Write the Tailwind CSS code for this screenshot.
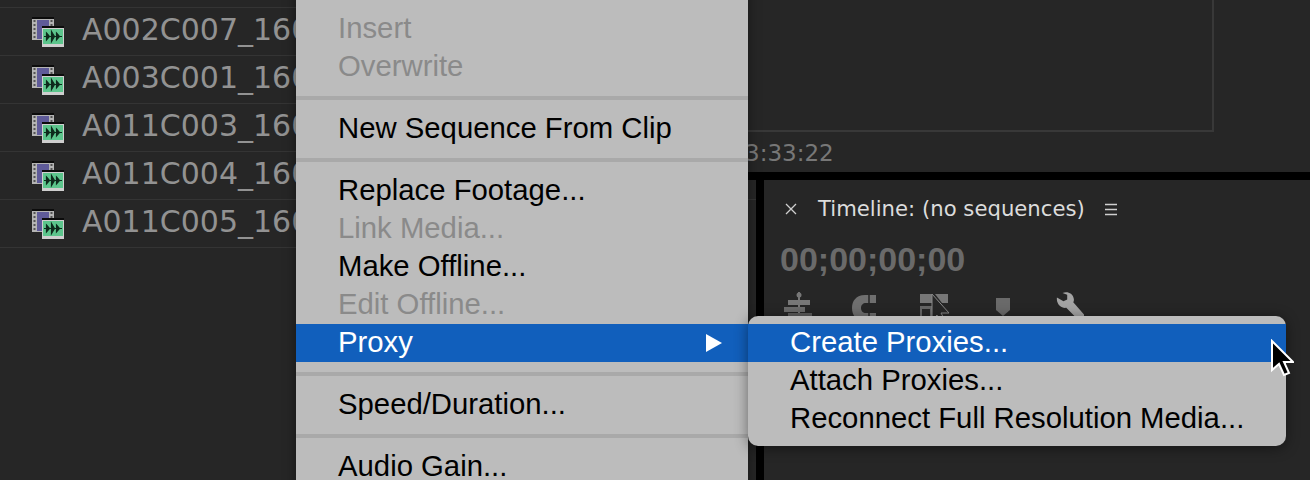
<!DOCTYPE html>
<html lang="en">
<head>
<meta charset="UTF-8">
<title>Proxy menu</title>
<script src="https://cdn.jsdelivr.net/npm/@tailwindcss/browser@4"></script>
</head>
<body class="bg-[#262626]">
<svg width="0" height="0" class="absolute">
  <symbol id="clip" viewBox="0 0 32 30">
    <rect x="0" y="0" width="22" height="2" fill="#0c0c0c"/>
    <rect x="0" y="2" width="22" height="21" fill="#b4b4b4"/>
    <rect x="5" y="3" width="12" height="19" fill="#5f5b99"/>
    <path d="M1.5 4h2M1.5 8h2M1.5 12h2M1.5 16h2M1.5 20h2M18.500 4h2M18.500 8h2M18.500 12h2" stroke="#333" stroke-width="1.500"/>
    <rect x="10" y="9" width="22" height="2" fill="#0c0c0c"/>
    <rect x="10" y="11" width="22" height="19" fill="#cfcfcf"/>
    <rect x="11" y="12" width="20" height="15" fill="#5cc58c"/>
    <path d="M12 19.500h18M14.500 16l3 3.500-3 3.500zM19.500 14.500l3 5-3 5zM24.500 16l3 3.500-3 3.500z" stroke="#0e2a1c" stroke-width="1.200" fill="#0e2a1c"/>
  </symbol>
</svg>

<div class="relative w-[1310px] h-[480px] overflow-hidden flex bg-[#262626] font-['Liberation_Sans',sans-serif]">

  <!-- project panel -->
  <div class="w-[700px] shrink-0 pt-[7px] text-[#929292] font-['DejaVu_Sans',sans-serif] text-[30px] leading-[44px]">
    <div class="h-[48px] border-t border-[#343434] flex items-start pl-[32px] gap-[18px]"><svg class="w-[32px] h-[30px] mt-[9px]"><use href="#clip"/></svg><span>A002C007_160</span></div>
    <div class="h-[48px] border-t border-[#343434] flex items-start pl-[32px] gap-[18px]"><svg class="w-[32px] h-[30px] mt-[9px]"><use href="#clip"/></svg><span>A003C001_160</span></div>
    <div class="h-[48px] border-t border-[#343434] flex items-start pl-[32px] gap-[18px]"><svg class="w-[32px] h-[30px] mt-[9px]"><use href="#clip"/></svg><span>A011C003_160</span></div>
    <div class="h-[48px] border-t border-[#343434] flex items-start pl-[32px] gap-[18px]"><svg class="w-[32px] h-[30px] mt-[9px]"><use href="#clip"/></svg><span>A011C004_160</span></div>
    <div class="h-[48px] border-t border-[#343434] flex items-start pl-[32px] gap-[18px]"><svg class="w-[32px] h-[30px] mt-[9px]"><use href="#clip"/></svg><span>A011C005_160</span></div>
    <div class="border-t border-[#343434]"></div>
  </div>

  <div class="flex-1 flex flex-col">
    <!-- monitor panel -->
    <div class="h-[172px] shrink-0 flex flex-col">
      <div class="h-[132px] w-[514px] border-r-2 border-b-2 border-[#383838]"></div>
      <div class="h-[40px] pl-[45px] pt-[4px] text-[#777] text-[23px] font-['DejaVu_Sans',sans-serif]">3:33:22</div>
    </div>
    <div class="h-[8px] shrink-0 bg-black"></div>
    <div class="flex-1 flex">
      <div class="w-[56px]"><div class="mt-[19px] border-t border-[#343434]"></div></div>
      <div class="w-[8px] bg-black"></div>
      <!-- timeline panel -->
      <div class="flex-1 pl-[16px] pt-[13px]">
        <div class="flex items-center h-[32px] text-[#dcdcdc] font-['DejaVu_Sans',sans-serif] text-[21.200px]">
          <svg class="w-[12px] h-[12px] mr-[21px] ml-[5px]" viewBox="0 0 12 12"><path d="M1 1l10 10M11 1L1 11" stroke="#cfcfcf" stroke-width="1.300"/></svg>
          <span>Timeline: (no sequences)</span>
          <svg class="w-[12px] h-[13px] ml-[20px]" viewBox="0 0 12 13"><path d="M0 1.500h12M0 6.500h12M0 11.500h12" stroke="#cfcfcf" stroke-width="1.500"/></svg>
        </div>
        <div class="mt-[14px] text-[34px] leading-[40px] font-bold text-[#6a6a6a]">00;00;00;00</div>
        <!-- toolbar -->
        <div class="flex mt-[13px] h-[30px] items-start">
          <svg class="w-[28px] h-[28px] ml-[4px]" viewBox="0 0 28 28"><path d="M15 0v28" stroke="#777" stroke-width="2"/><circle cx="15" cy="3" r="2.500" fill="#777"/><rect x="4" y="8" width="22" height="5" fill="#777"/><rect x="0" y="15" width="21" height="5" fill="#6c6c6c"/><rect x="4" y="21" width="24" height="7" fill="#5c5c5c"/></svg>
          <svg class="w-[24px] h-[26px] ml-[40px] mt-[3px]" viewBox="0 0 24 26"><path d="M24 0H13C4 0 0 6 0 13s4 13 13 13h11v-8H14c-3 0-5-2-5-5s2-5 5-5h10z" fill="#6f6f6f"/><path d="M17 0v8M17 18v8" stroke="#262626" stroke-width="1.500"/></svg>
          <svg class="w-[30px] h-[28px] ml-[44px] mt-[2px]" viewBox="0 0 30 28"><rect x="0" y="0" width="12" height="9" fill="#777"/><rect x="0" y="12" width="12" height="16" fill="#666"/><rect x="2" y="15" width="8" height="7" fill="#262626"/><path d="M15 0h13v9h-6z" fill="#777"/><path d="M12 0v26l5-5 5 9 4-2-5-9h8z" fill="#262626" stroke="#8a8a8a" stroke-width="1"/></svg>
          <svg class="w-[14px] h-[18px] ml-[46px] mt-[6px]" viewBox="0 0 14 18"><path d="M0 0h14v12l-7 6-7-6z" fill="#6a6a6a"/></svg>
          <svg class="w-[28px] h-[28px] ml-[46px]" viewBox="0 0 30 30"><path d="M1 6l7 4 4-2V3L7 1c5-2 11 0 12 6 .5 2 0 3-.5 4L30 24v6h-6L11 17C6 18 0 13 1 6z" fill="#a4a4a4"/></svg>
        </div>
      </div>
    </div>
  </div>

  <!-- context menu -->
  <div class="absolute left-[296px] top-[-10px] w-[452px] h-[500px] bg-[#bcbcbc] text-[29.300px] text-black shadow-[0_0_12px_rgba(0,0,0,0.4)]">
    <div class="pt-[20px]">
      <div class="h-[38px] pl-[42px] leading-[36px] text-[#8a8a8a]">Insert</div>
      <div class="h-[38px] pl-[42px] leading-[36px] text-[#8a8a8a]">Overwrite</div>
      <div class="h-[4px] my-[10px] bg-[#a9a9a9]"></div>
      <div class="h-[38px] pl-[42px] leading-[36px]">New Sequence From Clip</div>
      <div class="h-[4px] my-[10px] bg-[#a9a9a9]"></div>
      <div class="h-[38px] pl-[42px] leading-[36px]">Replace Footage...</div>
      <div class="h-[38px] pl-[42px] leading-[36px] text-[#8a8a8a]">Link Media...</div>
      <div class="h-[38px] pl-[42px] leading-[36px]">Make Offline...</div>
      <div class="h-[38px] pl-[42px] leading-[36px] text-[#8a8a8a]">Edit Offline...</div>
      <div class="h-[38px] pl-[42px] pr-[26px] leading-[36px] bg-[#115fbc] text-white flex items-start justify-between"><span>Proxy</span><span class="w-0 h-0 mt-[10px] border-y-[9px] border-y-transparent border-l-[16px] border-l-white"></span></div>
      <div class="h-[4px] my-[10px] bg-[#a9a9a9]"></div>
      <div class="h-[38px] pl-[42px] leading-[36px]">Speed/Duration...</div>
      <div class="h-[4px] my-[10px] bg-[#a9a9a9]"></div>
      <div class="h-[38px] pl-[42px] leading-[36px]">Audio Gain...</div>
    </div>
  </div>

  <!-- submenu -->
  <div class="absolute left-[748px] top-[316px] w-[538px] h-[130px] rounded-[10px] bg-[#bcbcbc] py-[8px] text-[29.300px] text-black shadow-[0_2px_14px_rgba(0,0,0,0.45)]">
    <div class="h-[38px] pl-[42px] leading-[36px] bg-[#115fbc] text-white">Create Proxies...</div>
    <div class="h-[38px] pl-[42px] leading-[36px]">Attach Proxies...</div>
    <div class="h-[38px] pl-[42px] leading-[36px]">Reconnect Full Resolution Media...</div>
  </div>

  <!-- mouse cursor -->
  <svg class="absolute left-[1270px] top-[339px] w-[24px] h-[38px]" viewBox="0 0 24 38"><path d="M2 2v29l7-6 5 11 5-2-5-11h9z" fill="#000" stroke="#fff" stroke-width="2"/></svg>
</div>
</body>
</html>
